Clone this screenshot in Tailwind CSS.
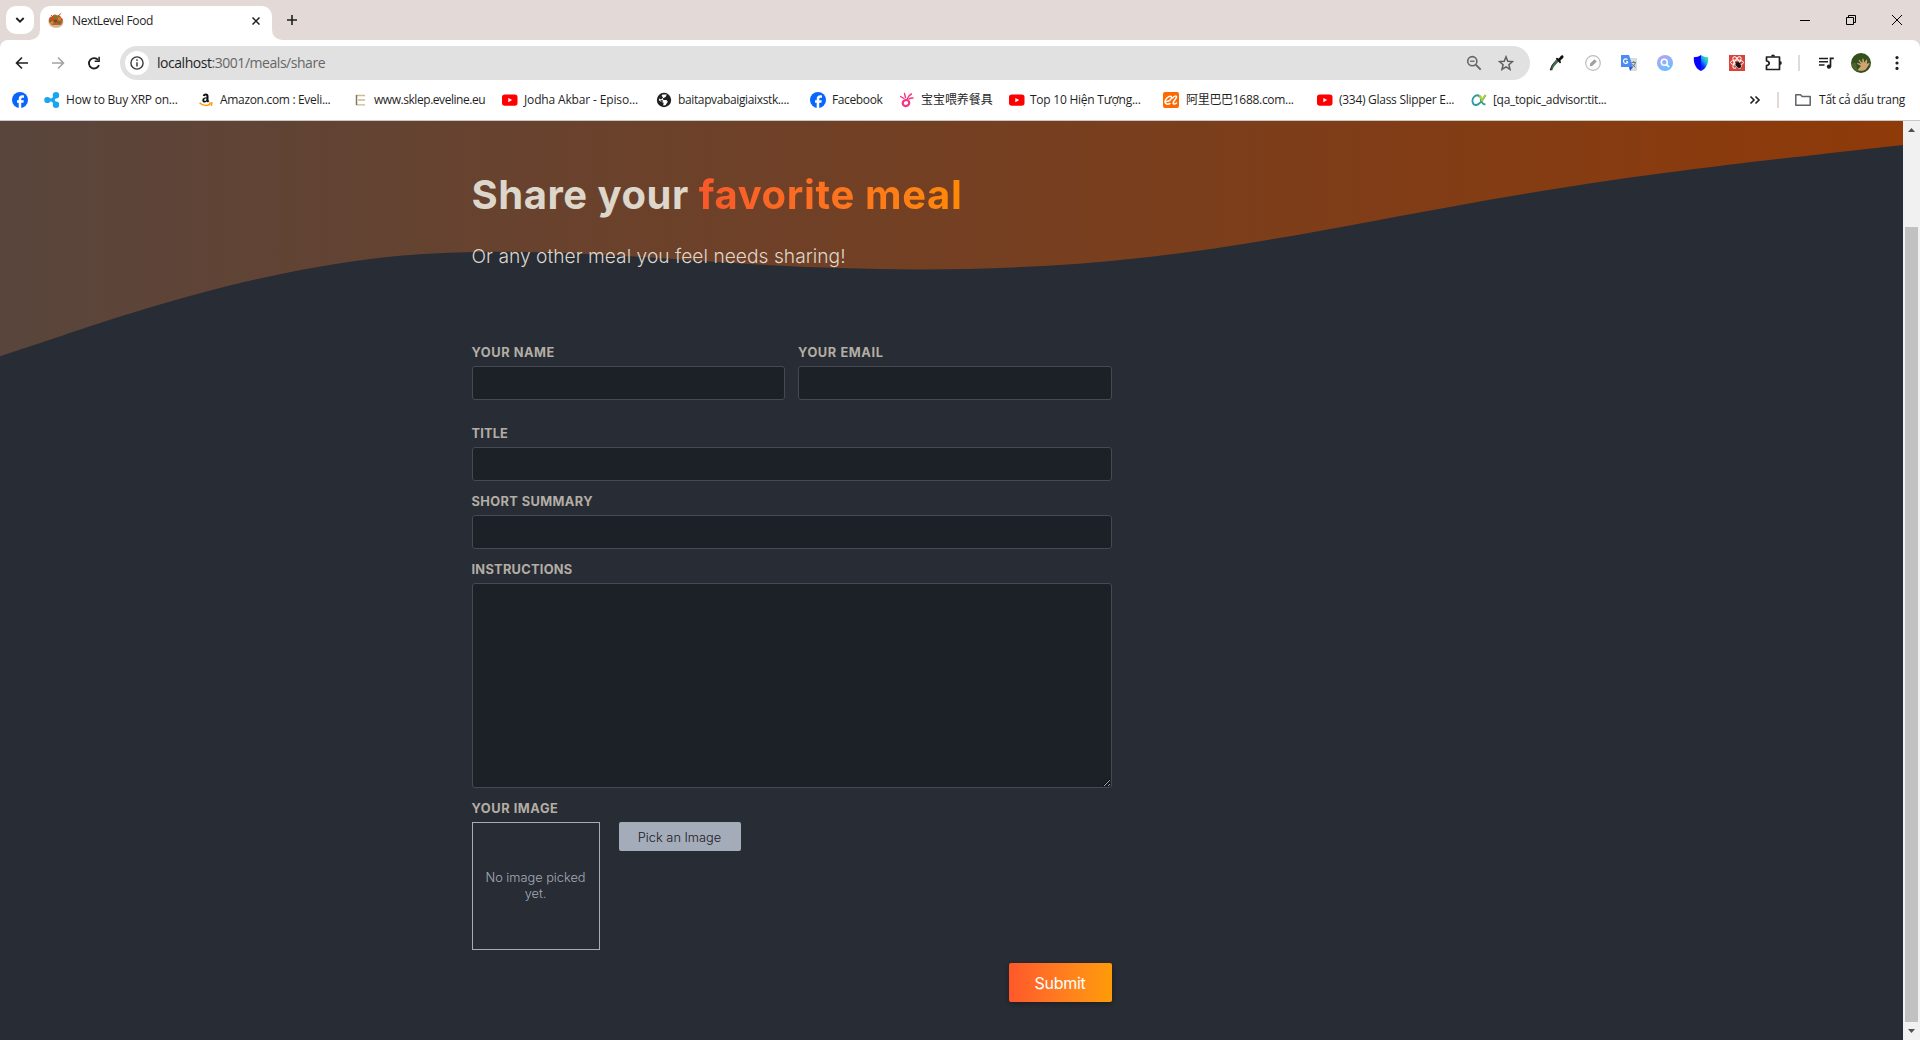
<!DOCTYPE html>
<html lang="vi">
<head>
<meta charset="utf-8">
<title>NextLevel Food</title>
<script src="https://cdn.jsdelivr.net/npm/@tailwindcss/browser@4"></script>
</head>
<body class="h-[1040px] w-[1920px] overflow-hidden bg-[#282c34] font-['Open_Sans','Noto_Sans_CJK_SC',sans-serif] text-[#1f1f1f]">
<svg class="hidden">
  <defs>
    <symbol id="yt" viewBox="0 0 16 16"><rect x="0" y="2.4" width="15.5" height="11.4" rx="2.8" fill="#f00"/><path d="M6.3 5.9v4.4l3.9-2.2z" fill="#fff"/></symbol>
    <symbol id="fb" viewBox="0 0 16 16"><circle cx="8" cy="8" r="8" fill="#0866ff"/><path d="M6.700 16v-5.300H5V8.300h1.700V7.200c0-2.700 1.200-3.900 3.800-3.900.5 0 1.100.1 1.500.2v2.200h-1c-1.300 0-1.800.5-1.800 1.700v.9h2.600l-.4 2.400H9.200V16z" fill="#fff"/></symbol>
  </defs>
</svg>
<div class="flex h-full flex-col">

  <!-- Tab strip -->
  <header class="flex h-10 shrink-0 bg-[#e3dad7]">
    <div class="mt-1.5 ml-1.5 grid size-7 place-items-center rounded-[10px] bg-white">
      <svg class="size-2.5" viewBox="0 0 10 10" fill="none" stroke="#1f1f1f" stroke-width="1.8"><path d="M1.300 3 5 6.700 8.700 3"/></svg>
    </div>
    <div class="relative mt-1.5 ml-1.5 flex w-[232px] items-center rounded-t-[10px] bg-white pb-[5px] pl-2">
      <svg class="absolute bottom-0 -left-2.5 size-2.5" viewBox="0 0 10 10"><path d="M10 0v10H0A10 10 0 0 0 10 0z" fill="#fff"/></svg>
      <svg class="absolute -right-2.5 bottom-0 size-2.5" viewBox="0 0 10 10"><path d="M0 0v10h10A10 10 0 0 1 0 0z" fill="#fff"/></svg>
      <svg class="size-4" viewBox="0 0 16 16"><path d="M.5 8.500h15c-.2 4-3.300 6.300-7.500 6.300S.7 12.500.5 8.500z" fill="#d8b48c"/><path d="M1 9c-1-3 1-6 3-5.500C5 1 8 .8 9 2.500c2-1 4 .5 4 2 2 .5 2.500 3 1.500 4.500L13 12H4z" fill="#b5602a"/><circle cx="4.500" cy="6" r="1.800" fill="#d9432a"/><circle cx="7.500" cy="4" r="1.500" fill="#5c8a35"/><circle cx="11.500" cy="6" r="1.700" fill="#e0792c"/><circle cx="7.500" cy="8" r="1.700" fill="#7a4a20"/><circle cx="11" cy="9.500" r="1.400" fill="#4b7a33"/><circle cx="4" cy="9.600" r="1.400" fill="#e8892f"/><circle cx="2.500" cy="8" r="1" fill="#4b7a33"/><path d="M10 3l3-2.500M3 2l2 2" stroke="#d9432a"/></svg>
      <span class="ml-2 text-xs tracking-[-0.37px]">NextLevel Food</span>
      <svg class="mt-px mr-3 ml-auto size-2" viewBox="0 0 8 8" stroke="#1f1f1f" stroke-width="1.5"><path d="M.5.5l7 7M7.500.5l-7 7"/></svg>
    </div>
    <svg class="mt-[15px] ml-[15px] size-2.5" viewBox="0 0 10 10" stroke="#1f1f1f" stroke-width="1.600"><path d="M5 0v10M0 5h10"/></svg>
    <div class="mt-[15px] mr-[18px] ml-auto flex gap-9">
      <svg class="size-2.5" viewBox="0 0 10 10" stroke="#000"><path d="M0 5.500h10"/></svg>
      <svg class="size-2.5" viewBox="0 0 10 10" fill="none" stroke="#000"><path d="M.5 2.500h7v7h-7zM2.500 2.500v-2h7v7h-2"/></svg>
      <svg class="size-2.5" viewBox="0 0 10 10" stroke="#000"><path d="M0 0l10 10M10 0L0 10"/></svg>
    </div>
  </header>

  <div class="h-20 shrink-0 bg-[#e3dad7]">
    <div class="h-20 rounded-t-lg bg-white">
      <!-- Toolbar -->
      <div class="flex h-[46px] items-center">
        <div class="ml-[13px] flex gap-[18px]">
          <svg class="size-[18px]" viewBox="0 0 18 18" fill="none" stroke="#1f1f1f" stroke-width="1.600"><path d="M15 9H4M9 3.500 3.500 9 9 14.500"/></svg>
          <svg class="size-[18px]" viewBox="0 0 18 18" fill="none" stroke="#a3a3a3" stroke-width="1.600"><path d="M3 9h11M9 3.500 14.500 9 9 14.500"/></svg>
          <svg class="size-[18px]" viewBox="0 0 18 18"><path d="M14 11.200A5.200 5.200 0 1 1 13.200 6" fill="none" stroke="#1f1f1f" stroke-width="1.800"/><path d="M14.900 2.800V8H9.700V6.500h3.700V2.800z" fill="#1f1f1f"/></svg>
        </div>
        <div class="ml-[17px] flex h-[34px] w-[1410px] items-center rounded-full bg-[#e1e1e1] pl-[5px]">
          <div class="grid size-6 place-items-center rounded-full bg-white">
            <svg class="size-[14px]" viewBox="0 0 14 14"><circle cx="7" cy="7" r="6.100" fill="none" stroke="#3b3b3b" stroke-width="1.400"/><path d="M7 6.200v4.200" stroke="#3b3b3b" stroke-width="1.500"/><circle cx="7" cy="4.100" r=".9" fill="#3b3b3b"/></svg>
          </div>
          <span class="ml-2 text-sm tracking-[-0.460px] text-[#666]"><span class="text-[#1f1f1f]">localhost</span>:3001/meals/share</span>
          <svg class="mr-4 ml-auto size-4" viewBox="0 0 16 16" fill="none" stroke="#666"><circle cx="6.300" cy="6.200" r="4.600" stroke-width="1.600"/><path d="M9.700 9.600l5 5" stroke-width="1.900"/><path d="M4 6.200h4.600" stroke-width="1.300"/></svg>
          <svg class="mr-4 size-4" viewBox="0 0 16 16" fill="none" stroke="#5f5f5f" stroke-width="1.500"><path d="M8 1.800l1.800 4.400 4.700.4-3.600 3.100 1.100 4.600L8 11.800l-4 2.500 1.100-4.600-3.600-3.100 4.700-.4z"/></svg>
        </div>
        <div class="ml-[19px] flex items-center gap-5">
          <svg class="size-4" viewBox="0 0 16 16"><path d="M9.500 5 4 11l-1.800 4" stroke="#3c6b49" stroke-width="2.200" fill="none"/><path d="M8 4.300 3.300 9.800 1.200 15l1.500-.3" stroke="#222" stroke-width="1" fill="none"/><path d="M6.800 3.700l1-1 2 .9 2-2.700c1.600-1.600 3.700.3 2.300 2l-2.700 2.600.6 2-1 1z" fill="#111"/></svg>
          <svg class="size-4" viewBox="0 0 16 16"><circle cx="8" cy="8" r="7.300" fill="#fff" stroke="#bdbdbd" stroke-width="1.200"/><path d="M4.700 11.300l.5-2.800 4.300-4.300 2.300 2.300-4.300 4.300z" fill="#a0a0a0"/></svg>
          <svg class="size-4" viewBox="0 0 16 16"><path d="M6 3h10v13H9z" fill="#dcdcdc"/><path d="M0 0h8l4 12H0z" fill="#4c8bf5"/><path d="M8 12h4l-3 4z" fill="#2a56c6"/><path d="M6.900 6.500H5.200M6.500 4.600A2.300 2.300 0 1 0 6.900 7" stroke="#fff" stroke-width="1.200" fill="none"/><path d="M10.500 7.500H15M12.700 6v1.500M14.300 7.800c-.5 2-1.500 3-2.600 4M11.500 9c.6 1.500 1.700 2.500 3 3.200" stroke="#607d8b" fill="none"/></svg>
          <svg class="size-4" viewBox="0 0 16 16"><defs><linearGradient id="q" x1="0" y1="0" x2=".4" y2="1"><stop stop-color="#b9a2f5"/><stop offset="1" stop-color="#6fbcff"/></linearGradient></defs><circle cx="8" cy="8" r="8" fill="url(#q)"/><circle cx="7.300" cy="7.300" r="3" fill="none" stroke="#fff" stroke-width="1.600"/><path d="M9.600 9.600l2.600 2.600" stroke="#fff" stroke-width="1.800"/></svg>
          <svg class="size-4" viewBox="0 0 16 16"><defs><linearGradient id="s" x1="0" y1="1" x2=".6" y2="0"><stop offset=".3" stop-color="#0a22f5"/><stop offset=".65" stop-color="#18a5f0"/><stop offset="1" stop-color="#3fec95"/></linearGradient></defs><path d="M8 0c2 1.500 4.500 2.200 7.200 2.200C15.500 9 13 13.700 8 16z" fill="url(#s)"/><path d="M8 0C6 1.500 3.500 2.200.8 2.200.5 9 3 13.700 8 16z" fill="#0404ff"/></svg>
          <svg class="size-4" viewBox="0 0 16 16"><path d="M0 0h16v16H0z" fill="#d9433a"/><g fill="none" stroke="#fff"><ellipse cx="8" cy="7.500" rx="6.500" ry="2.500"/><ellipse cx="8" cy="7.500" rx="6.500" ry="2.500" transform="rotate(60 8 7.500)"/><ellipse cx="8" cy="7.500" rx="6.500" ry="2.500" transform="rotate(120 8 7.500)"/></g><ellipse cx="9.500" cy="10" rx="2.200" ry="3" transform="rotate(-35 9.500 10)" fill="#1d1010"/><path d="M6 9.500l6.500 3M7.500 13l4-6M12 8l-5 3M10 13.500 7 7" stroke="#1d1010" stroke-width=".8"/></svg>
          <svg class="-mt-0.5 -ml-px size-[18px]" viewBox="0 0 18 18"><path d="M2.500 4h13v12.500h-13v-4c3.600-.6 3.600-4.100 0-4.500z" fill="none" stroke="#1f1f1f" stroke-width="1.700" stroke-linejoin="round"/><path d="M7 3.500a2 2 0 0 1 4 0zM15.800 8a2 2 0 0 1 0 4z" fill="#1f1f1f"/></svg>
        </div>
        <div class="ml-4 h-4 w-0.5 bg-[#e3dad7]"></div>
        <svg class="ml-[18px] size-4" viewBox="0 0 16 16"><path d="M1 3.500h9M1 6.700h9M1 9.900h5.500" stroke="#1f1f1f" stroke-width="1.500"/><path d="M12.500 11.500V3.300h3.300" stroke="#1f1f1f" stroke-width="1.700" fill="none"/><circle cx="11" cy="11.600" r="2.200" fill="#1f1f1f"/></svg>
        <svg class="ml-[17px] size-5" viewBox="0 0 20 20"><circle cx="10" cy="10" r="10" fill="#34501d"/><path d="M0.500 10a9.500 9.500 0 0 0 6 8.800L5 10z" fill="#4b632d"/><path d="M6.500 17 10 13 6 10.700l.5-1L10 11 7.500 7.300l1-.5L11.500 10l-.3-4.200 1.200-.1 1.200 4 1.700-3.200 1 .5L15.900 11l2.100-1.200.6.900-3.400 5c-1.500 2-5 3-8.700 1.300z" fill="#cfa274"/></svg>
        <svg class="ml-[18px] size-4" viewBox="0 0 16 16" fill="#1f1f1f"><circle cx="8" cy="2.600" r="1.600"/><circle cx="8" cy="8" r="1.600"/><circle cx="8" cy="13.400" r="1.600"/></svg>
      </div>

      <!-- Bookmarks -->
      <div class="flex h-7 items-center pl-3 text-xs tracking-[-0.37px] whitespace-nowrap">
        <svg class="mr-4 size-4"><use href="#fb"/></svg>
        <div class="flex w-[154px] items-center gap-1.5"><svg class="size-4" viewBox="0 0 16 16" fill="#19a5ef"><circle cx="3.300" cy="8" r="3.100"/><circle cx="12" cy="3.300" r="3.200"/><circle cx="12" cy="12.700" r="3.200"/><circle cx="9" cy="8" r="2"/><path d="M3 6.500h5l2-4 3 2-2.500 3.500 2.500 3.500-3 2-2-4H3z"/></svg><span class="tracking-[-0.22px]">How to Buy XRP on...</span></div>
        <div class="flex w-[156px] items-center gap-1.5"><svg class="size-4" viewBox="0 0 16 16"><path d="M4.800 3.800C5.300.8 10.500.4 10.500 4v4.200l.9 1.100-1.600 1.300-1-1.200c-1.600 2-4.500 1.200-4.500-1.200 0-2.300 2.200-2.900 4.200-3 .1-2.200-1.700-1.800-2-.9zM8.500 6.500c-1.500 0-2.300.4-2.300 1.600 0 1.500 2.300 1.200 2.300-1.600z" fill="#111" fill-rule="evenodd"/><path d="M1.500 10.800c3.500 3.200 8 3.200 11 1.400" fill="none" stroke="#f90" stroke-width="1.500"/><path d="M11 11.200l3-.2-.7 3" fill="none" stroke="#f90" stroke-width="1.200"/></svg><span class="tracking-[-0.32px]">Amazon.com : Eveli...</span></div>
        <div class="flex w-[148px] items-center gap-1"><svg class="size-4" viewBox="0 0 16 16" fill="none"><path d="M2 3.500h9M4 8h7M2 12.800h9" stroke="#c9bb95" stroke-width="1.300"/><path d="M2.500 3v10" stroke="#8b7355" stroke-width="1.500"/></svg><span class="tracking-[-0.45px]">www.sklep.eveline.eu</span></div>
        <div class="flex w-[155px] items-center gap-1.5"><svg class="size-4"><use href="#yt"/></svg><span class="tracking-[-0.15px]">Jodha Akbar - Episo...</span></div>
        <div class="-ml-px flex w-[154px] items-center gap-1.5"><svg class="size-4" viewBox="0 0 16 16"><circle cx="8" cy="8" r="7.200" fill="#1f1f1f"/><path d="M6.500 2.500h4.300L9.600 4.900 7 6.200l.3 1.700h3.200l1.300 1.900-2.300 3.400-2.300.2.400-2.600-2.700-1L2.600 8z" fill="#fff"/><path d="M5.500 3.500l1.600 2.300L5 7.500 3.500 6.500zM4.600 8l2.400.5-.5 1.400-1.700-.5z" fill="#1f1f1f"/></svg><span>baitapvabaigiaixstk....</span></div>
        <div class="flex w-[90px] items-center gap-1.5"><svg class="size-4"><use href="#fb"/></svg><span>Facebook</span></div>
        <div class="-ml-px flex w-[110px] items-center gap-1.5"><svg class="size-4" viewBox="0 0 16 16" fill="none" stroke="#f7327f"><ellipse cx="7" cy="11" rx="3.300" ry="3" stroke-width="2.200" transform="rotate(-20 7 11)"/><path d="M5 6.500 1.500 4.500M6.500 5.500 5.500 1.500M8.500 6.500c.5-2 2-3.500 4-4.500M10 7c1-.8 2.500-1.200 4-1" stroke-width="1.400" stroke-linecap="round"/></svg><span class="tracking-[-0.05px]">宝宝喂养餐具</span></div>
        <div class="flex w-[154px] items-center gap-[5px]"><svg class="size-4"><use href="#yt"/></svg><span class="tracking-[-0.24px]">Top 10 Hiện Tượng...</span></div>
        <div class="flex w-[154px] items-center gap-[7px]"><svg class="size-4" viewBox="0 0 16 16"><rect width="16" height="16" rx="2" fill="#ff6a00"/><path d="M3.500 9.500c3-.5 5.500-2.500 5-4.500-.6-1.800-4.500-.2-6 3-1.400 3.500 1.200 5.200 4.500 3.500M9.500 6c1.500-2 4.500-2.700 4-.8-.4 1.800-3.500 4-3.300 6 .2 1.500 2.300.8 3.300-.2" fill="none" stroke="#fff" stroke-width="1.500" stroke-linecap="round"/></svg><span class="tracking-[-0.3px]">阿里巴巴1688.com...</span></div>
        <div class="flex w-[154px] items-center gap-1.5"><svg class="size-4"><use href="#yt"/></svg><span class="tracking-[-0.28px]">(334) Glass Slipper E...</span></div>
        <div class="flex items-center gap-1.5"><svg class="size-4" viewBox="0 0 16 16" fill="none" stroke-width="1.800"><path d="M14.500 3c-2 3.500-5 9.600-9.300 10-3.700.2-4.700-4.500-2.700-7.500C4.500 2.500 8 2.500 9 5.500" stroke="#2a9aa8"/><path d="M9.500 6.500c.7 3 1.700 5.800 5 6" stroke="#35a08a"/><path d="M8 3.500c2 0 2.200 3 3.200 5.500M14.500 3l-3.200 5" stroke="#b5c92e"/></svg><span class="tracking-[-0.32px]">[qa_topic_advisor:tit...</span></div>
        <svg class="mr-4 ml-auto size-3" viewBox="0 0 12 12" fill="none" stroke="#1f1f1f" stroke-width="1.600"><path d="M1.500 2.500 5 6 1.500 9.500M6.500 2.500 10 6 6.500 9.500"/></svg>
        <div class="h-4 w-0.5 bg-[#e3dad7]"></div>
        <svg class="mr-2 ml-4 size-4" viewBox="0 0 16 16" fill="none" stroke="#5f6368" stroke-width="1.500"><path d="M.8 13.300V2.700h4.700l1.700 1.800h8v8.800z" stroke-linejoin="round"/></svg>
        <span class="mr-[15px] tracking-[-0.28px]">Tất cả dấu trang</span>
      </div>
    </div>
  </div>
  <div class="h-px shrink-0 bg-[#c9c8c6]"></div>

  <!-- Page viewport -->
  <div class="flex min-h-0 flex-1">
    <div class="relative flex-1 overflow-hidden font-['Inter',sans-serif]">
      <svg class="absolute -top-[103px] left-0 h-[423px] w-[1903px]" viewBox="0 0 1440 320">
        <defs><linearGradient id="wave" x1="0%" y1="0%" x2="100%" y2="0%"><stop offset="0%" stop-color="#59453c"/><stop offset="100%" stop-color="#8f3a09"/></linearGradient></defs>
        <path fill="url(#wave)" d="M0,256L48,240C96,224,192,192,288,181.3C384,171,480,181,576,186.7C672,192,768,192,864,181.3C960,171,1056,149,1152,133.3C1248,117,1344,107,1392,101.3L1440,96L1440,0L0,0Z"/>
      </svg>
      <main class="relative mx-auto w-[960px] pt-[50px]">
        <h1 class="text-[40px] leading-[48px] font-bold tracking-[0.52px] text-[#ddd6cb]">Share your <span class="bg-linear-to-r from-[#f9572a] to-[#ff8a05] bg-clip-text tracking-[0.65px] text-transparent">favorite meal</span></h1>
        <p class="mt-[25px] text-[19.2px] leading-6 font-light tracking-[0.02px] text-[#ddd6cb]">Or any other meal you feel needs sharing!</p>
        <form class="mt-[77px] w-[640px]">
          <div class="flex gap-[13px]">
            <div class="flex-1">
              <label class="block text-[12.8px] leading-4 font-bold tracking-[0.55px] text-[#b3aea5]">YOUR NAME</label>
              <input class="mt-[5px] block h-[34px] w-full rounded-[3px] border border-[#454952] bg-[#1c2027]">
            </div>
            <div class="flex-1">
              <label class="block text-[12.8px] leading-4 font-bold tracking-[0.6px] text-[#b3aea5]">YOUR EMAIL</label>
              <input class="mt-[5px] block h-[34px] w-full rounded-[3px] border border-[#454952] bg-[#1c2027]">
            </div>
          </div>
          <label class="mt-[26px] block text-[12.8px] leading-4 font-bold tracking-[0.15px] text-[#b3aea5]">TITLE</label>
          <input class="mt-[5px] block h-[34px] w-full rounded-[3px] border border-[#454952] bg-[#1c2027]">
          <label class="mt-[13px] block text-[12.8px] leading-4 font-bold tracking-[0.4px] text-[#b3aea5]">SHORT SUMMARY</label>
          <input class="mt-[5px] block h-[34px] w-full rounded-[3px] border border-[#454952] bg-[#1c2027]">
          <label class="mt-[13px] block text-[12.8px] leading-4 font-bold tracking-[0.28px] text-[#b3aea5]">INSTRUCTIONS</label>
          <textarea class="mt-[5px] block h-[205px] w-full resize rounded-[3px] border border-[#454952] bg-[#1c2027]"></textarea>
          <label class="mt-[13px] block text-[12.8px] leading-4 font-bold tracking-[0.55px] text-[#b3aea5]">YOUR IMAGE</label>
          <div class="mt-[5px] flex items-start gap-[19px]">
            <div class="flex size-32 items-center justify-center border border-[#a4abb9] px-2.5 text-center text-[12.8px] leading-4 font-light tracking-[-0.02px] text-[#a4abb9]"><p>No image picked yet.</p></div>
            <button class="h-[29px] w-[122px] rounded-[2px] bg-[#a4abb9] pt-0.5 text-[12.8px] font-light text-[#1c2027]">Pick an Image</button>
          </div>
          <div class="mt-[13px] flex justify-end">
            <button class="h-[39px] w-[103px] rounded-[2px] bg-linear-to-r from-[#ff572a] to-[#ff9b05] text-base tracking-[-0.25px] text-white shadow-[0_2px_5px_rgba(0,0,0,0.3)]">Submit</button>
          </div>
        </form>
      </main>
    </div>
    <!-- Scrollbar -->
    <div class="flex w-[17px] flex-col items-center bg-[#f1f1f1]">
      <svg class="mt-[7px] h-1 w-[7px]" viewBox="0 0 7 4"><path d="M0 4 3.500 0 7 4z" fill="#505050"/></svg>
      <div class="mt-[95px] h-[795px] w-[13px] bg-[#c1c1c1]"></div>
      <svg class="mt-[7px] h-1 w-[7px]" viewBox="0 0 7 4"><path d="M0 0h7L3.500 4z" fill="#505050"/></svg>
    </div>
  </div>
</div>
</body>
</html>
